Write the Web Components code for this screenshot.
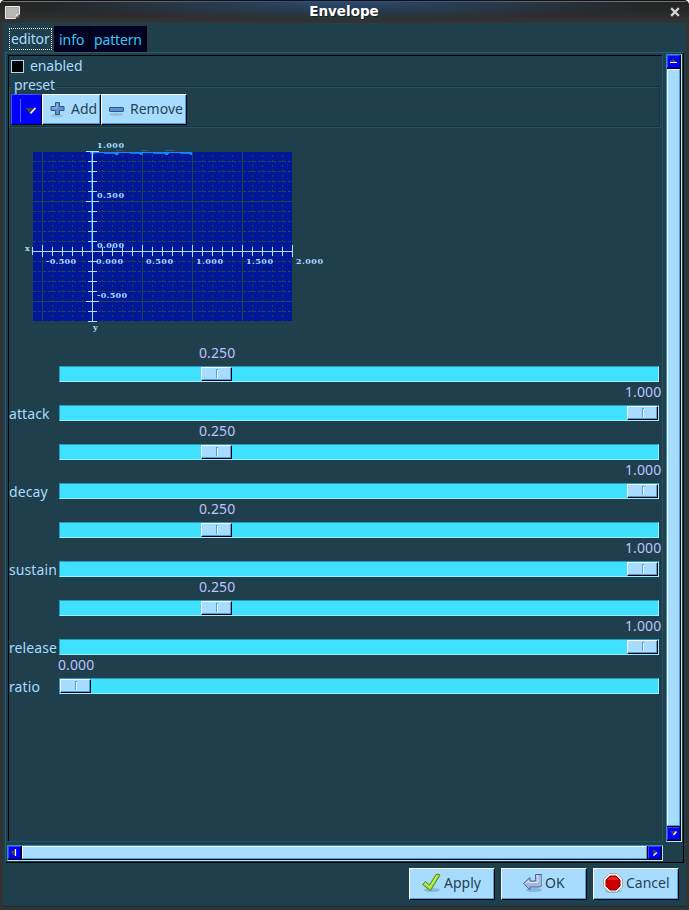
<!DOCTYPE html>
<html lang="en"><head><meta charset="utf-8"><title>Envelope</title>
<style>
html,body{margin:0;height:910px;overflow:hidden;background:#fff}
body{font:14px/18px "Noto Sans","Open Sans",sans-serif;color:#a8dcff}
</style></head><body>
<envelope-window></envelope-window>
<script>
function define(name, html){
  customElements.define(name, class extends HTMLElement{
    connectedCallback(){
      if(this.shadowRoot) return;
      const t=document.createElement('template');
      t.innerHTML=typeof html==='function'?html(this):html;
      this.attachShadow({mode:'open'}).append(t.content.cloneNode(true));
    }
  });
}

define('title-bar',`<style>
:host{display:grid;grid-template-columns:18px 1fr 18px;align-items:center;height:23px;padding:0 5px 0 4px;box-sizing:border-box;border-top:1px solid #181010;
background:radial-gradient(ellipse 310px 19px at 50% 0,#2a4d75,#2a4d7500),linear-gradient(#777 0,#777 1px,#222423 1px,#282b2b 50%,#333);border-radius:5px 5px 0 0}
b{font:bold 13.5px/20px "DejaVu Sans",sans-serif;color:#fff;text-align:center;text-shadow:1px 1px #182028;margin-bottom:2px}
svg{display:block}
</style>
<svg width="17" height="16"><path d="M1.500 2.500h14v8l-4 4h-10z" fill="#aaa9a4" stroke="#ededeb"/><path d="M3 4h11v6l-4 3H3z" fill="#b8b7b3"/><path d="M11 14l5-4-1 4z" fill="#666"/><path d="M11 14l1-4 3 0z" fill="#ddd"/></svg>
<b>Envelope</b>
<svg width="18" height="18"><path d="M6 6l6 6M12 6l-6 6" stroke="#d5d5d2" stroke-width="2.300" stroke-linecap="square"/></svg>`);

define('note-tab',`<style>
:host{display:block;box-sizing:border-box;height:26px;background:#000020;color:#34c9ee;padding:5px 0 0 5px;border-right:1px solid #000;letter-spacing:-.05px}
:host(:last-child){padding-left:4px;letter-spacing:-.15px}
:host([active]){height:24px;background:none;color:#a8dcff;padding:0;border:0;letter-spacing:-.15px}
:host([active]) span{outline:1px dotted #fff;display:block;width:41px;height:20px;line-height:20px;margin:3px 3px 0 0;text-indent:1px}
</style><span><slot></slot></span>`);

define('gtk-arrow',e=>{
  const d={up:'M2 6V5L5 3l3 2v1z',down:'M2 3h7L6 7H5z',left:'M6 2v7L2 6V5z',right:'M4 2v7l4-3V5z'}[e.getAttribute('dir')];
  const l={up:'M2 6.500h7',down:'M5.500 7L8.500 3.500',left:'M6.500 2v7',right:'M4.500 8.500L8 5.500'}[e.getAttribute('dir')];
  return `<style>:host{display:block;box-sizing:border-box;width:13px;height:13px;flex:none;background:#00f;border:1px solid #3f3fff;border-right-color:#0000a0;border-bottom-color:#0000a0}svg{display:block}</style><svg width="11" height="11"><path d="${d}" fill="#444"/><path d="${l}" stroke="#fff" stroke-width="1.200"/></svg>`;
});

define('scroll-bar',e=>{
 const v=e.hasAttribute('vertical');
 return `<style>:host{display:flex;box-sizing:border-box;border:1px solid #2794b1;border-right-color:#9df0ff;border-bottom-color:#9df0ff;background:#000;${v?'flex-direction:column;width:16px;height:788px':'width:656px;height:16px'};gap:1px;padding:0 1px 1px 0}
 i{flex:1;background:#a8dcff;box-sizing:border-box;border:1px solid #fff;border-right-color:#4c9fe0;border-bottom-color:#4c9fe0}</style>
 <gtk-arrow dir="${v?'up':'left'}"></gtk-arrow><i></i><gtk-arrow dir="${v?'down':'right'}"></gtk-arrow>`;
});

define('push-button',`<style>
:host{display:flex;box-sizing:border-box;align-items:center;background:#a8dcff;color:#264352;border:1px solid #fff;border-right-color:#000;border-bottom-color:#000;box-shadow:inset -1px -1px #4c9fe0}
</style><slot name="icon"></slot><slot></slot>`);

define('check-option',`<style>:host{display:flex;gap:6px;height:19px;align-items:center;letter-spacing:-.1px}i{width:11px;height:11px;border:1px solid #a8dcff;background:#000;margin:1px 0 0 2px}</style><i></i><span><slot></slot></span>`);

define('preset-frame',`<style>
:host{display:block}
fieldset{margin:0;padding:0;border:1px solid #18303b;border-left-color:#235266;box-shadow:1px 1px #235266,inset 0 1px #235266;height:41px;position:relative;box-sizing:border-box;width:651px}
legend{position:absolute;left:3px;top:-11px;background:#203f4c;padding:0 1px;line-height:18px;letter-spacing:-.1px}
.row{display:flex;padding:7px 0 0 1px;height:31px}
.combo{width:29px;height:29px;background:#00f;border:1px solid #3d55ff;border-right-color:#000;border-bottom-color:#000}
push-button{box-sizing:border-box;height:31px;padding-bottom:1px}.add{width:59px;padding-left:6px;gap:5px}.rem{width:86px;padding-left:6px;gap:5px}
svg{display:block}
</style><fieldset><legend>preset</legend><div class="row">
<div class="combo"><svg width="29" height="29"><path d="M8.500 4v23" stroke="#4a65ff"/><path d="M13 13h11l-5.500 6z" fill="#444"/><path d="M18.500 18.500l5-5.500" stroke="#fff" stroke-width="1.500"/></svg></div>
<push-button class="add"><svg slot="icon" width="17" height="18"><ellipse cx="8" cy="15.500" rx="6" ry="2" fill="#7fa9c8" opacity=".5"/><path d="M6.500 2.500h4v4h4.500v4h-4.500v4h-4v-4H2v-4h4.500z" fill="#628fc8" stroke="#2c5694"/><path d="M8 4v4H3.500" stroke="#9fc1e8" fill="none"/></svg>Add</push-button>
<push-button class="rem"><svg slot="icon" width="17" height="18"><ellipse cx="8.500" cy="14.500" rx="7" ry="1.500" fill="#7fa9c8" opacity=".6"/><rect x="1.500" y="7.500" width="14" height="4" rx=".5" fill="#628fc8" stroke="#2c5694"/></svg>Remove</push-button>
</div></fieldset>`);

define('envelope-plot',()=>{
 let s='';
 for(let x=42;x<292;x+=10) s+=(x-42)%50?`<path d="M${x+.5} 155V321" stroke="#20464c" stroke-dasharray="2 3"/>`:'';
 for(let y=161;y<321;y+=10) s+=(y-151)%50?`<path d="M33 ${y+.5}H292" stroke="#20464c" stroke-dasharray="3 2"/>`:'';
 for(let x=42;x<292;x+=50) s+=`<path d="M${x+.5} 152V321" stroke="#20464c"/>`;
 for(let y=201;y<321;y+=50) s+=`<path d="M33 ${y+.5}H292" stroke="#20464c"/>`;
 s+='<path d="M91.500 152V251" stroke="#1763ec"/><path d="M90 152.500H192" stroke="#1687ff"/><path d="M90 153.500h5M104 153.500h15M130 153.500h12M153 153.500h16M180 153.500h12" stroke="#176bed"/><path d="M114 153.500h5M139 153.500h4M164 153.500h5M189 153.500h3M115 154.500h3M140 154.500h2M165 154.500h3M190 154.500h2" stroke="#1687ff"/><path d="M116 150.500h7M141 150.500h7M165 150.500h9" stroke="#205e84"/>';
 let t='M33 251.500H293M92.500 151V321M32.500 247v8';
 for(let x=42;x<=292;x+=10) t+=(x-42)%50?`M${x+.5} 247v9`:`M${x+.5} 245v12`;
 for(let y=151;y<=321;y+=10) t+=(y-151)%50?`M88 ${y+.5}h9`:`M86 ${y+.5}h13`;
 s+=`<path d="${t}" stroke="#a8e4ff" fill="none"/>`;
 for(const [x,y,l,w] of [[97,148,'1.000',27],[97,198,'0.500',27],[97,248,'0.000',27],[97,298,'-0.500',30],[46,264,'-0.500',30],[96,264,'0.000',27],[146,264,'0.500',27],[196,264,'1.000',27],[246,264,'1.500',27],[296,264,'2.000',27],[25,251,'x',5],[93,330,'y',5]])
  s+=`<text x="${x}" y="${y}" textLength="${w}">${l}</text>`;
 return `<style>:host{display:block;height:208px;width:320px}svg{display:block}text{font:bold 8px "DejaVu Serif",serif;fill:#a8dcff}</style>
 <svg width="320" height="208" viewBox="9 128 320 208" shape-rendering="crispEdges"><path d="M33 152H292V321H33z" fill="#001898"/>${s}</svg>`;
});

define('value-slider',e=>{
 const v=e.getAttribute('value'), pos={'0.250':[141,139],'1.000':[567,565],'0.000':[0,-2]}[v];
 return `<style>
 :host{display:grid;grid-template-columns:50px 600px;height:39px;grid-template-rows:23px 16px}
 .value{grid-column:2;margin-left:${pos[1]}px;line-height:20px;color:#b9c4ff;width:40px;text-indent:1px;letter-spacing:.1px}
 .label{line-height:18px;white-space:nowrap;letter-spacing:.1px}
 .trough{background:#40e0ff;border:1px solid #289cbc;border-right-color:#9df0ff;border-bottom-color:#9df0ff;box-sizing:border-box;display:flex;padding-left:${pos[0]}px}
 .thumb{flex:none;box-sizing:border-box;width:31px;height:14px;background:#a8dcff;border:1px solid #fff;border-right-color:#000;border-bottom-color:#000;box-shadow:inset -1px -1px #4c9fe0;display:flex;justify-content:center}
 .thumb i{width:1px;height:8px;margin-top:1px;border:1px solid #4c9fe0;border-right:0;border-bottom:0;background:#fff}
 </style><div class="value">${v}</div><div class="label"><slot></slot></div><div class="trough"><div class="thumb"><i></i></div></div>`;
});

define('editor-pane',`<style>
:host{display:block;box-sizing:border-box;width:656px;height:788px;border:1px solid #203f4c;border-right-color:#235266;border-bottom-color:#235266;border-left:0;padding:0 0 0 1px;}
.view{border:1px solid #000;border-right-color:#203f4c;border-bottom:0;box-sizing:border-box;height:786px}
.params{padding-top:7px}
preset-frame{padding:11px 0 1px}
</style><div class="view">
<check-option>enabled</check-option>
<preset-frame></preset-frame>
<envelope-plot></envelope-plot>
<div class="params">
<value-slider value="0.250"></value-slider><value-slider value="1.000">attack</value-slider>
<value-slider value="0.250"></value-slider><value-slider value="1.000">decay</value-slider>
<value-slider value="0.250"></value-slider><value-slider value="1.000">sustain</value-slider>
<value-slider value="0.250"></value-slider><value-slider value="1.000">release</value-slider>
<value-slider value="0.000">ratio</value-slider></div></div>`);

define('note-book',`<style>
:host{display:block;padding:3px 0 0 2px}
.tabs{display:flex;height:26px;padding-left:5px;align-items:flex-start}
.page{box-sizing:border-box;width:679px;height:811px;border:1px solid #235f78;border-right:1px solid #000;border-bottom:1px solid #000;padding:1px 0 0 1px;display:grid;grid-template-columns:656px 16px;grid-template-rows:788px 16px;column-gap:3px;row-gap:3px}
.tabs note-tab:nth-child(1){width:44px}.tabs note-tab:nth-child(2){width:36px}.tabs note-tab:nth-child(3){width:57px}
</style><div class="tabs"><note-tab active>editor</note-tab><note-tab>info</note-tab><note-tab>pattern</note-tab></div>
<div class="page"><editor-pane></editor-pane><scroll-bar vertical></scroll-bar><scroll-bar></scroll-bar></div>`);

define('dialog-actions',`<style>
:host{display:flex;gap:6px;padding:5px 0 0 406px}
push-button{width:86px;height:32px;padding-bottom:2px}svg{display:block}
.a{padding-left:11px;gap:2px}.o{padding-left:20px;gap:3px}.c{padding-left:8px;gap:2px}
</style>
<push-button class="a"><svg slot="icon" width="21" height="22"><ellipse cx="11" cy="18" rx="8" ry="2" fill="#82b9dd"/><path d="M1.500 12.500l3-3 4 3.500 6.500-10.500q2-1 4 .5L9.500 18.500z" fill="#9bdc35" stroke="#4e8c15"/><path d="M4 11.500l5 4 7-12" fill="none" stroke="#d5f684"/></svg>Apply</push-button>
<push-button class="o"><svg slot="icon" width="20" height="22"><ellipse cx="12" cy="18" rx="8" ry="2" fill="#82b9dd"/><path d="M1.500 11.500L8 5.500V9h5.500V7.500V2.500h6.500V12q0 3-3 3H8v3z" fill="#a4b8d9" stroke="#4b659c"/><path d="M3.500 11.500L7 8.500v2h9V4h-2" fill="none" stroke="#e1eaf7"/></svg>OK</push-button>
<push-button class="c"><svg slot="icon" width="22" height="22"><ellipse cx="11" cy="19" rx="8" ry="2" fill="#82b9dd"/><path d="M7 1.500h8l5.500 5.500v8L15 20H7l-5.500-5V7z" fill="#f1f1ed" stroke="#aaa9a2"/><path d="M8 4h6l4 4v6l-4 4H8l-4-4V8z" fill="#ca0000" stroke="#930000"/><path d="M5 8l3-3h6l3 3z" fill="#e92525"/></svg>Cancel</push-button>`);

define('envelope-window',`<style>
:host{display:block;width:689px;height:910px;background:#333;border-radius:5px 5px 0 0;overflow:hidden}
main{box-sizing:border-box;width:683px;height:884px;margin-left:3px;background:#203f4c;border-bottom:1px solid #182d36}
</style><title-bar></title-bar><main><note-book></note-book><dialog-actions></dialog-actions></main>`);
</script></body></html>
